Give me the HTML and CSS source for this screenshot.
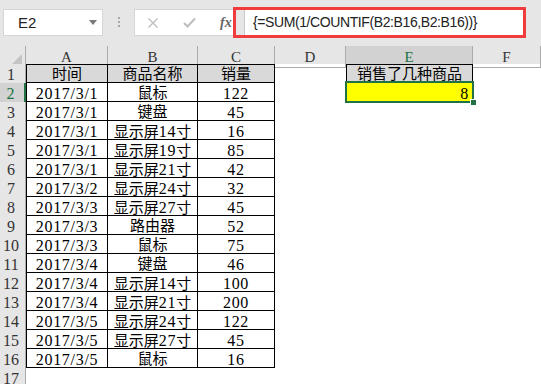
FILE: index.html
```html
<!DOCTYPE html>
<html lang="zh-CN">
<head>
  <meta charset="UTF-8">
  <title>销售了几种商品</title>
  <link rel="stylesheet" href="styles.css">
</head>
<body>
  <div class="fbar">
    <div class="namebox"><span>E2</span><span class="caret"></span></div>
    <div class="grip"><i></i><i></i><i></i></div>
    <div class="fnbox">
      <svg class="ico-x" width="10" height="10" viewBox="0 0 10 10"><path d="M0.5 0.5L9.5 9.5M9.5 0.5L0.5 9.5" stroke="#bdbdbd" stroke-width="1.4" fill="none"/></svg>
      <svg class="ico-ok" width="13" height="11" viewBox="0 0 13 11"><path d="M1 6L4.5 9.5L12 1.5" stroke="#bdbdbd" stroke-width="2" fill="none"/></svg>
      <span class="fx">fx</span>
    </div>
    <div class="formula">
      <div class="split"></div>
      <div class="input">{=SUM(1/COUNTIF(B2:B16,B2:B16))}</div>
    </div>
  </div>

  <div class="sheet">
    <div class="row cols">
      <div class="corner"><svg width="10" height="10" viewBox="0 0 10 10"><polygon points="10,0 10,10 0,10" fill="#c4c4c4"/></svg></div>
      <div class="ch">A</div>
      <div class="ch">B</div>
      <div class="ch">C</div>
      <div class="ch">D</div>
      <div class="ch on">E</div>
      <div class="ch">F</div>
    </div>

    <div class="row">
      <div class="rh">1</div>
      <div class="cell t a hd">时间</div>
      <div class="cell t hd">商品名称</div>
      <div class="cell t hd">销量</div>
      <div class="cell"></div>
      <div class="cell t a hd">销售了几种商品</div>
      <div class="cell"></div>
    </div>
    <div class="row">
      <div class="rh on">2</div>
      <div class="cell t a num">2017/3/1</div>
      <div class="cell t">鼠标</div>
      <div class="cell t num">122</div>
      <div class="cell"></div>
      <div class="cell t a result num">8<span class="selbox"></span><span class="handle"></span></div>
      <div class="cell"></div>
    </div>
    <div class="row">
      <div class="rh">3</div>
      <div class="cell t a num">2017/3/1</div>
      <div class="cell t">键盘</div>
      <div class="cell t num">45</div>
      <div class="cell"></div><div class="cell"></div><div class="cell"></div>
    </div>
    <div class="row">
      <div class="rh">4</div>
      <div class="cell t a num">2017/3/1</div>
      <div class="cell t">显示屏<span class="d">14</span>寸</div>
      <div class="cell t num">16</div>
      <div class="cell"></div><div class="cell"></div><div class="cell"></div>
    </div>
    <div class="row">
      <div class="rh">5</div>
      <div class="cell t a num">2017/3/1</div>
      <div class="cell t">显示屏<span class="d">19</span>寸</div>
      <div class="cell t num">85</div>
      <div class="cell"></div><div class="cell"></div><div class="cell"></div>
    </div>
    <div class="row">
      <div class="rh">6</div>
      <div class="cell t a num">2017/3/1</div>
      <div class="cell t">显示屏<span class="d">21</span>寸</div>
      <div class="cell t num">42</div>
      <div class="cell"></div><div class="cell"></div><div class="cell"></div>
    </div>
    <div class="row">
      <div class="rh">7</div>
      <div class="cell t a num">2017/3/2</div>
      <div class="cell t">显示屏<span class="d">24</span>寸</div>
      <div class="cell t num">32</div>
      <div class="cell"></div><div class="cell"></div><div class="cell"></div>
    </div>
    <div class="row">
      <div class="rh">8</div>
      <div class="cell t a num">2017/3/3</div>
      <div class="cell t">显示屏<span class="d">27</span>寸</div>
      <div class="cell t num">45</div>
      <div class="cell"></div><div class="cell"></div><div class="cell"></div>
    </div>
    <div class="row">
      <div class="rh">9</div>
      <div class="cell t a num">2017/3/3</div>
      <div class="cell t">路由器</div>
      <div class="cell t num">52</div>
      <div class="cell"></div><div class="cell"></div><div class="cell"></div>
    </div>
    <div class="row">
      <div class="rh">10</div>
      <div class="cell t a num">2017/3/3</div>
      <div class="cell t">鼠标</div>
      <div class="cell t num">75</div>
      <div class="cell"></div><div class="cell"></div><div class="cell"></div>
    </div>
    <div class="row">
      <div class="rh">11</div>
      <div class="cell t a num">2017/3/4</div>
      <div class="cell t">键盘</div>
      <div class="cell t num">46</div>
      <div class="cell"></div><div class="cell"></div><div class="cell"></div>
    </div>
    <div class="row">
      <div class="rh">12</div>
      <div class="cell t a num">2017/3/4</div>
      <div class="cell t">显示屏<span class="d">14</span>寸</div>
      <div class="cell t num">100</div>
      <div class="cell"></div><div class="cell"></div><div class="cell"></div>
    </div>
    <div class="row">
      <div class="rh">13</div>
      <div class="cell t a num">2017/3/4</div>
      <div class="cell t">显示屏<span class="d">21</span>寸</div>
      <div class="cell t num">200</div>
      <div class="cell"></div><div class="cell"></div><div class="cell"></div>
    </div>
    <div class="row">
      <div class="rh">14</div>
      <div class="cell t a num">2017/3/5</div>
      <div class="cell t">显示屏<span class="d">24</span>寸</div>
      <div class="cell t num">122</div>
      <div class="cell"></div><div class="cell"></div><div class="cell"></div>
    </div>
    <div class="row">
      <div class="rh">15</div>
      <div class="cell t a num">2017/3/5</div>
      <div class="cell t">显示屏<span class="d">27</span>寸</div>
      <div class="cell t num">45</div>
      <div class="cell"></div><div class="cell"></div><div class="cell"></div>
    </div>
    <div class="row">
      <div class="rh">16</div>
      <div class="cell t a num">2017/3/5</div>
      <div class="cell t">鼠标</div>
      <div class="cell t num">16</div>
      <div class="cell"></div><div class="cell"></div><div class="cell"></div>
    </div>
    <div class="row">
      <div class="rh">17</div>
      <div class="cell"></div><div class="cell"></div><div class="cell"></div>
      <div class="cell"></div><div class="cell"></div><div class="cell"></div>
    </div>
  </div>
</body>
</html>
```

FILE: styles.css
```css
body {
  margin: 0;
  background: #fff;
  font-family: "Liberation Serif", "Noto Sans CJK SC", serif;
  color: #000;
  overflow: hidden;
}

/* formula bar */
.fbar {
  display: flex;
  align-items: flex-start;
  height: 46px;
  background: #e6e6e6;
}
.namebox {
  margin: 9px 0 0 3px;
  width: 100px;
  height: 27px;
  box-sizing: border-box;
  background: #fff;
  border: 1px solid #d6d6d6;
  display: flex;
  align-items: center;
  justify-content: space-between;
  padding: 0 5px 0 14px;
  font-family: "Liberation Sans", sans-serif;
  font-size: 15px;
  color: #222;
}
.caret {
  width: 0;
  height: 0;
  border-left: 4px solid transparent;
  border-right: 4px solid transparent;
  border-top: 5px solid #7a7a7a;
}
.grip {
  width: 31px;
  margin-top: 17px;
  display: flex;
  flex-direction: column;
  align-items: center;
  gap: 2px;
}
.grip i {
  width: 2px;
  height: 2px;
  background: #a8a8a8;
}
.fnbox {
  margin-top: 9px;
  width: 99px;
  height: 27px;
  box-sizing: border-box;
  background: #fff;
  border: 1px solid #d6d6d6;
  border-right: 0;
  display: flex;
  align-items: center;
  padding-left: 13px;
}
.ico-ok {
  margin-left: 25px;
}
.fx {
  margin-left: 24px;
  font-family: "Liberation Serif", serif;
  font-style: italic;
  font-weight: bold;
  font-size: 14px;
  color: #666;
}
.formula {
  margin-top: 7px;
  width: 293px;
  height: 31px;
  box-sizing: border-box;
  border: 3px solid #f03c3c;
  display: flex;
  background: #fff;
}
.split {
  width: 8px;
  background: #e6e6e6;
  border-right: 1px solid #c8c8c8;
}
.input {
  padding-left: 8px;
  font-family: "Liberation Sans", sans-serif;
  font-size: 14px;
  letter-spacing: -0.4px;
  line-height: 24px;
  color: #222;
}

/* grid */
.row {
  display: grid;
  grid-template-columns: 26px 82px 90px 77px 71px 127px 68px;
  height: 19px;
}
.cols {
  height: 18px;
  background: #e6e6e6;
}
.corner {
  box-sizing: border-box;
  border-right: 1px solid #ababab;
  border-bottom: 1px solid #ababab;
  display: flex;
  align-items: flex-end;
  justify-content: flex-end;
  padding: 0 3px 3px 0;
}
.ch {
  box-sizing: border-box;
  border-right: 1px solid #ababab;
  border-bottom: 1px solid #ababab;
  text-align: center;
  font-size: 15px;
  padding-top: 2px;
  line-height: 18px;
  color: #333;
}
.ch.on {
  background: #d2d2d2;
  color: #217346;
  border-bottom: 2px solid #217346;
}
.rh {
  box-sizing: border-box;
  background: #e6e6e6;
  border-right: 1px solid #ababab;
  border-bottom: 1px solid #d9d9d9;
  text-align: center;
  padding: 2px 3px 0 0;
  font-size: 16px;
  line-height: 17px;
  color: #333;
}
.rh.on {
  background: #d2d2d2;
  color: #217346;
  border-right: 2px solid #217346;
}
.cell {
  box-sizing: border-box;
  height: 19px;
  font-size: 15px;
  padding-top: 2px;
  line-height: 17px;
  text-align: center;
  white-space: nowrap;
}
.num,
.d {
  font-size: 16px;
  letter-spacing: 0.7px;
}
.t {
  border-right: 1px solid #000;
  border-bottom: 1px solid #000;
}
.t.a {
  border-left: 1px solid #000;
}
.hd {
  background: #d9d9d9;
  border-top: 1px solid #000;
  padding-top: 1px;
  line-height: 16px;
}
.result {
  position: relative;
  background: #ffff00;
  text-align: right;
  padding-right: 3px;
}
.selbox {
  position: absolute;
  left: -2px;
  top: -2px;
  right: -2px;
  bottom: -2px;
  border: 2px solid #217346;
}
.handle {
  position: absolute;
  right: -5px;
  bottom: -5px;
  width: 5px;
  height: 5px;
  background: #217346;
  border: 1px solid #fff;
}
```
